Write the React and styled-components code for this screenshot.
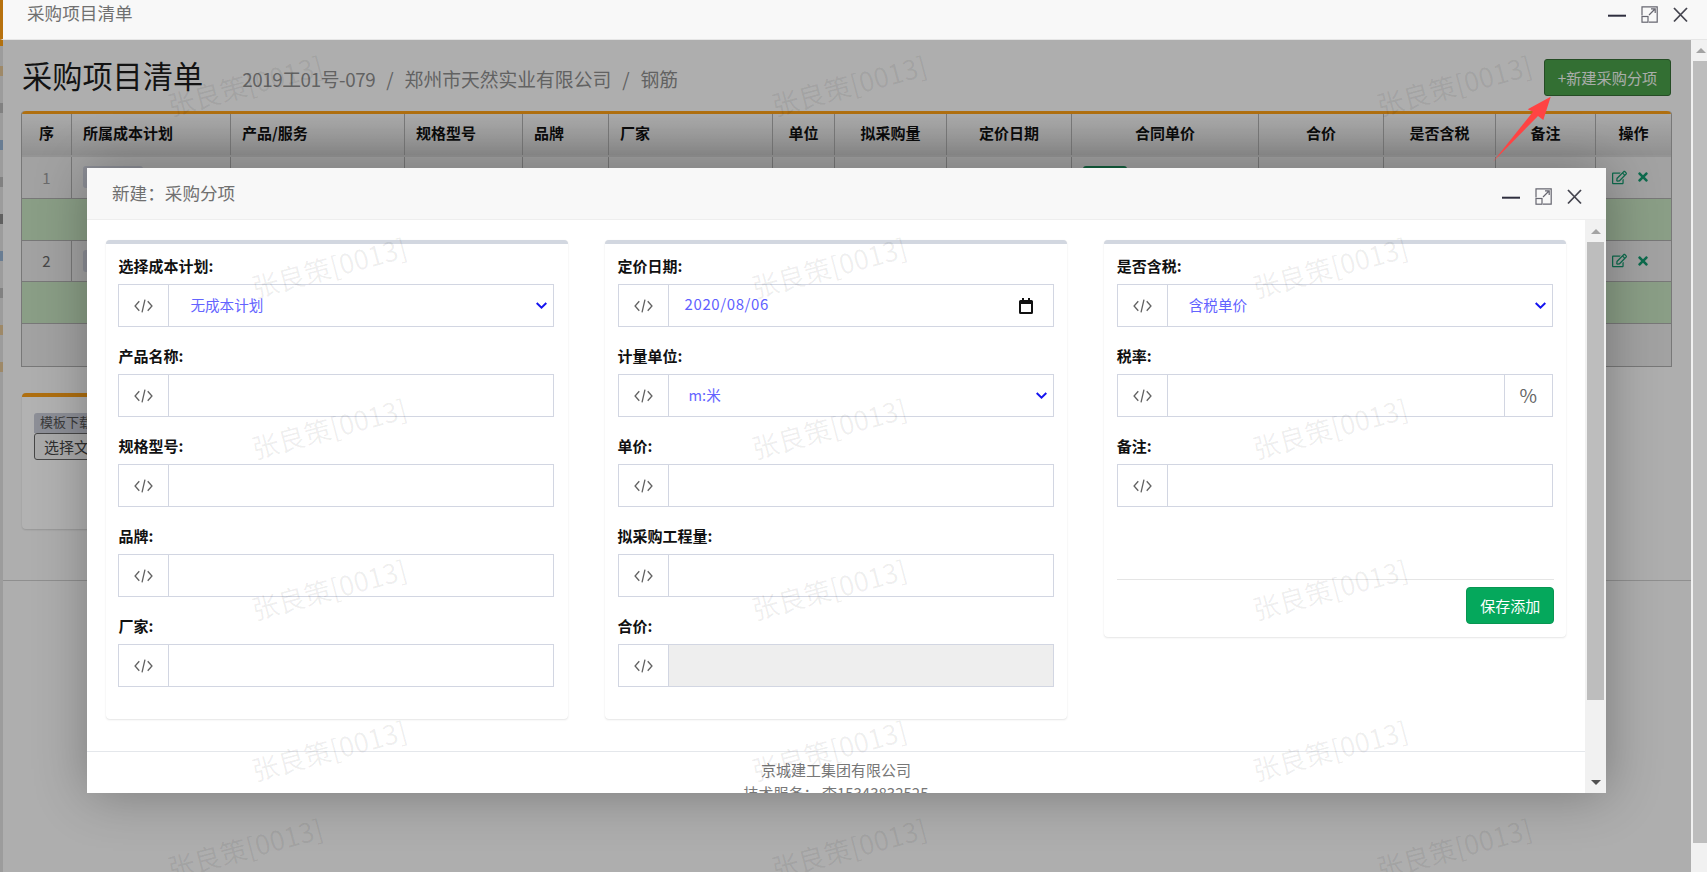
import React from 'react'
import styled, {createGlobalStyle} from 'styled-components'
import {FaRegEdit, FaTimes} from 'react-icons/fa'

const GRID = '50px 159px 174px 118px 86px 164px 62px 112px 125px 187px 125px 112px 100px 75px'

const headCols = [
  {label: '序'},
  {label: '所属成本计划', left: true},
  {label: '产品/服务', left: true},
  {label: '规格型号', left: true},
  {label: '品牌', left: true},
  {label: '厂家', left: true},
  {label: '单位'},
  {label: '拟采购量'},
  {label: '定价日期'},
  {label: '合同单价'},
  {label: '合价'},
  {label: '是否含税'},
  {label: '备注'},
  {label: '操作'},
]

// slivers of the sidebar that show at the very left of the page
const railMarks = ['#e6a13c','#8a8a8a','#3f7fc4','#8a8a8a','#222','#3f7fc4','#8a8a8a','#e6a13c','#e6a13c']

const GlobalStyle = createGlobalStyle`
  html,body{
    margin:0;
    padding:0;
    height:100%;
    overflow:hidden;
    background:#fff;
    font-family:"Noto Sans CJK SC","Noto Sans",sans-serif;
  }
  *{box-sizing:border-box;}
`

const Page = styled.div`
  width:1707px;
  height:872px;
  display:flex;
  flex-direction:column;
  position:relative;
  overflow:hidden;
`

const TitleBar = styled.div`
  height:40px;
  flex:none;
  display:flex;
  justify-content:space-between;
  align-items:flex-start;
  background:#f8f8f8;
  border-left:3px solid #b8720f;
  border-bottom:1px solid #e6e6e6;
  padding-left:24px;
`

const TitleText = styled.div`
  font-size:17.6px;
  line-height:25px;
  color:#707070;
`

const WinIcons = styled.div`
  display:flex;
  align-items:center;
  gap:15px;
  margin-top:${p=>p.$top}px;
  margin-right:${p=>p.$right}px;
`

const Under = styled.div`
  flex:1;
  min-height:0;
  display:flex;
`

const Frame = styled.div`
  flex:1;
  min-width:0;
  position:relative;
  display:flex;
  overflow:hidden;
  background:#fafafa;
`

const Rail = styled.div`
  flex:none;
  width:3px;
  background:#e0e0e0;
  border-top:6px solid #ffa216;
  display:flex;
  flex-direction:column;
  padding-top:20px;
  gap:27px;
  overflow:hidden;
`

const RailMark = styled.span`
  flex:none;
  height:10px;
  background:${p=>p.$color};
  opacity:.45;
`

const Content = styled.div`
  flex:1;
  min-width:0;
`

const Main = styled.div`
  padding:19px 20px 0 19px;
`

const HeadRow = styled.div`
  height:37px;
  display:flex;
  align-items:center;
  margin-bottom:15px;
`

const PageTitle = styled.h1`
  margin:0 0 4px;
  font-size:30.2px;
  line-height:33px;
  font-weight:400;
  color:#1c1c1c;
`

const Crumbs = styled.div`
  display:flex;
  align-items:center;
  gap:11px;
  margin:2px 0 0 39px;
  font-size:18.8px;
  line-height:26px;
  color:#8d8d8d;
`

const CrumbCode = styled.span`
  letter-spacing:-.4px;
`

const NewButton = styled.button`
  margin-left:auto;
  width:127px;
  height:37px;
  padding:0;
  border:1px solid #366e36;
  border-radius:3px;
  background:#49a049;
  color:#f4f8f4;
  font:400 15.2px/33px "Noto Sans CJK SC",sans-serif;
`

const Table = styled.div`
  width:1649px;
  border-top:3px solid #fba017;
  border-radius:4px 4px 0 0;
  border-bottom:1px solid #adadad;
  box-shadow:1px 0 0 #adadad,-1px 0 0 #adadad;
`

const TableHead = styled.div`
  display:grid;
  grid-template-columns:${GRID};
  height:43px;
  border-bottom:2px solid #d4d4d4;
  background:linear-gradient(#f4f4f4,#cfcfcf);
`

const HeadCell = styled.div`
  display:flex;
  align-items:center;
  justify-content:${p=>p.$left?'flex-start':'center'};
  padding:0 0 3px ${p=>p.$left?'11px':'0'};
  border-right:1px solid #adadad;
  font-size:15px;
  line-height:20px;
  font-weight:700;
  color:#111;
  &:last-child{border-right:none;}
`

const Row = styled.div`
  display:grid;
  grid-template-columns:${GRID};
  height:41.8px;
  background:#e8e8e8;
  border-bottom:1px solid #adadad;
`

const Cell = styled.div`
  display:flex;
  align-items:center;
  justify-content:${p=>p.$center?'center':'flex-start'};
  padding-left:${p=>p.$center?'0':'11px'};
  border-right:1px solid #adadad;
  font-size:15px;
  color:${p=>p.$color||'#666'};
  &:last-child{border-right:none;}
`

const Tag = styled.span`
  width:${p=>p.$width}px;
  height:22px;
  border-radius:3px;
  background:${p=>p.$color};
`

const Actions = styled.div`
  display:flex;
  align-items:center;
  gap:9px;
  padding-left:16px;
  color:#139a6f;
`

const DetailRow = styled.div`
  height:41.8px;
  background:#c6e2c0;
  border-bottom:1px solid #adadad;
`

const BlankRow = styled.div`
  height:41.8px;
  background:#e8e8e8;
`

const UploadPanel = styled.div`
  width:700px;
  height:136px;
  margin-top:26px;
  border-top:4px solid #fba017;
  border-radius:4px;
  background:#fff;
  box-shadow:0 1px 2px rgba(0,0,0,.15);
  padding:16px 12px;
`

const UploadTag = styled.div`
  width:80px;
  height:20px;
  padding-left:6px;
  border-radius:3px 3px 0 0;
  background:#cacdd9;
  font-size:13px;
  line-height:17px;
  color:#555;
`

const FileButton = styled.button`
  display:block;
  width:104px;
  height:27px;
  padding:0 0 0 9px;
  text-align:left;
  border:1px solid #666;
  border-radius:3px;
  background:#f4f4f4;
  color:#444;
  font:400 15px/23px "Noto Sans CJK SC",sans-serif;
`

const PageFooterLine = styled.div`
  height:1px;
  margin-top:51px;
  background:#cdcdcd;
`

const Shade = styled.div`
  position:absolute;
  inset:0;
  background:rgba(0,0,0,.3);
`

const Mark = styled.div`
  position:absolute;
  left:${p=>p.$x}px;
  top:${p=>p.$y}px;
  transform:translate(-50%,-50%) rotate(-15deg);
  font-size:27px;
  line-height:28px;
  white-space:nowrap;
  color:rgba(0,0,0,.065);
  pointer-events:none;
`

const ScrollTrack = styled.div`
  flex:none;
  width:${p=>p.$width}px;
  background:#f1f1f1;
  display:flex;
  flex-direction:column;
`

const ScrollGap = styled.div`
  flex:1;
`

const ArrowSlot = styled.div`
  height:${p=>p.$height}px;
  flex:none;
  display:flex;
  align-items:center;
  justify-content:center;
  padding-left:${p=>p.$pad||0}px;
`

const Arrow = styled.span`
  width:0;
  height:0;
  border-left:5px solid transparent;
  border-right:5px solid transparent;
  ${p=>p.$down
    ? 'border-top:5px solid #505050;'
    : 'border-bottom:5px solid #a3a3a3;'}
`

const Thumb = styled.div`
  flex:none;
  height:${p=>p.$height}px;
  margin-left:2px;
  width:${p=>p.$width}px;
  background:#bdbdbd;
`

const Modal = styled.div`
  position:absolute;
  left:87px;
  top:168px;
  width:1519px;
  height:625px;
  display:flex;
  flex-direction:column;
  overflow:hidden;
  background:#fff;
  box-shadow:1px 1px 50px rgba(0,0,0,.3);
`

const ModalHead = styled.div`
  height:52px;
  flex:none;
  display:flex;
  justify-content:space-between;
  align-items:flex-start;
  background:#f8f8f8;
  border-bottom:1px solid #eee;
  padding-left:25px;
`

const ModalTitle = styled.div`
  font-size:17.6px;
  line-height:26px;
  margin-top:12px;
  color:#707070;
`

const ModalBody = styled.div`
  flex:1;
  min-height:0;
  display:flex;
`

const ModalScroll = styled.div`
  flex:1;
  min-width:0;
  overflow:hidden;
`

const Cards = styled.div`
  display:grid;
  grid-template-columns:repeat(3,462px);
  column-gap:37.2px;
  align-items:start;
  padding:20px 0 32px 18.9px;
`

const Card = styled.div`
  border-top:4px solid #d2d7e0;
  border-radius:4px;
  background:#fff;
  box-shadow:0 1px 2px rgba(0,0,0,.1),0 0 1px rgba(0,0,0,.06);
  padding:12px 13.5px 13px 12.5px;
`

const Field = styled.div`
  margin-bottom:19px;
`

const Label = styled.div`
  font-size:15px;
  line-height:20px;
  font-weight:700;
  color:#111;
  margin-bottom:8px;
`

const Group = styled.div`
  display:flex;
  height:43px;
  border:1px solid #d2d6e2;
  background:#fff;
`

const Addon = styled.div`
  flex:none;
  width:${p=>p.$width}px;
  display:flex;
  align-items:center;
  justify-content:center;
  ${p=>p.$end?'border-left':'border-right'}:1px solid #d2d6e2;
`

const CodeWrap = styled.span`
  display:flex;
  padding-top:1px;
`

const Percent = styled.span`
  padding-bottom:3px;
  font-size:19px;
  color:#666;
`

const TextInput = styled.input`
  flex:1;
  min-width:0;
  border:none;
  outline:none;
  padding:0 12px;
  background:#fff;
  &:disabled{background:#eee;}
`

const SelectBox = styled.div`
  flex:1;
  min-width:0;
  display:flex;
  align-items:center;
  justify-content:space-between;
  padding:0 6px 0 ${p=>p.$pad}px;
  font-size:14.6px;
  color:#6464ff;
`

const SelectValue = styled.span`
  margin-bottom:2px;
`

const DateBox = styled.div`
  flex:1;
  min-width:0;
  display:flex;
  align-items:center;
  justify-content:space-between;
  padding:0 20px 4px 16px;
  font-size:15px;
  letter-spacing:.6px;
  color:#5f5fff;
  svg{margin-top:5px;}
`

const CardFoot = styled.div`
  margin-top:72px;
  margin-right:-1.500px;
  border-top:1px solid #e5e5e5;
  padding-top:7px;
  display:flex;
  justify-content:flex-end;
`

const SaveButton = styled.button`
  width:88px;
  height:37px;
  padding:0;
  border:1px solid #089652;
  border-radius:4px;
  background:#05a85c;
  color:#fff;
  font:400 15px/33px "Noto Sans CJK SC",sans-serif;
`

const ModalFoot = styled.div`
  border-top:1px solid #e4e7eb;
  padding-top:6px;
  text-align:center;
  font-size:15px;
  line-height:23px;
  color:#777;
`

const PointerArrow = styled.svg`
  position:absolute;
  left:1490px;
  top:94px;
`

function MinIcon(){
  return (
    <svg width="18" height="17" viewBox="0 0 18 17">
      <path d="M0 9.7H18" stroke="#2e2e3e" strokeWidth="2"/>
    </svg>
  )
}

function MaxIcon(){
  return (
    <svg width="17" height="17" viewBox="0 0 17 17" fill="none" stroke="#666670" strokeWidth="1.2">
      <path d="M1 9.5V.8H16.2V16.2H8"/>
      <rect x="1" y="10.5" width="6" height="5.7"/>
      <path d="M8 9L14 3M10 2.8H14.2V7"/>
    </svg>
  )
}

function CloseIcon(){
  return (
    <svg width="15" height="17" viewBox="0 0 15 17" fill="none" stroke="#45454f" strokeWidth="1.8">
      <path d="M1 2L14 15.5M14 2L1 15.5"/>
    </svg>
  )
}

function WindowButtons({top,right}){
  return (
    <WinIcons $top={top} $right={right}>
      <MinIcon/>
      <MaxIcon/>
      <CloseIcon/>
    </WinIcons>
  )
}

function CodeIcon(){
  return (
    <CodeWrap>
      <svg width="19" height="14" viewBox="0 0 18 13" fill="none" stroke="#626262" strokeWidth="1.25">
        <path d="M5 2L1 6.5L5 11M13 2L17 6.5L13 11M10.4 .4L7.6 12.6"/>
      </svg>
    </CodeWrap>
  )
}

function Chevron(){
  return (
    <svg width="11" height="7" viewBox="0 0 11 7" fill="none" stroke="#1414f0" strokeWidth="2">
      <path d="M.7 1L5.5 5.6L10.3 1"/>
    </svg>
  )
}

function CalendarIcon(){
  return (
    <svg width="14" height="16" viewBox="0 0 14 16">
      <path fill="#111" d="M3 0h2v2h4V0h2v2h1.5A1.5 1.5 0 0 1 14 3.500v11a1.500 1.500 0 0 1-1.500 1.500h-11A1.500 1.500 0 0 1 0 14.500v-11A1.500 1.500 0 0 1 1.500 2H3zM2 6v8h10V6z"/>
    </svg>
  )
}

function InputField({label,disabled}){
  return (
    <Field>
      <Label>{label}</Label>
      <Group>
        <Addon $width={50}><CodeIcon/></Addon>
        <TextInput disabled={disabled}/>
      </Group>
    </Field>
  )
}

function SelectField({label,value,pad}){
  return (
    <Field>
      <Label>{label}</Label>
      <Group>
        <Addon $width={50}><CodeIcon/></Addon>
        <SelectBox $pad={pad}>
          <SelectValue>{value}</SelectValue>
          <Chevron/>
        </SelectBox>
      </Group>
    </Field>
  )
}

function ScrollBar({width,thumbWidth,topSlot,thumb,bottomSlot,pad}){
  return (
    <ScrollTrack $width={width}>
      <ArrowSlot $height={topSlot} $pad={pad}><Arrow/></ArrowSlot>
      <Thumb $height={thumb} $width={thumbWidth}/>
      <ScrollGap/>
      {bottomSlot && <ArrowSlot $height={bottomSlot}><Arrow $down/></ArrowSlot>}
    </ScrollTrack>
  )
}

const outerMarks = [[244.5,45],[849,45],[1453.5,45],[244.5,808],[849,808],[1453.5,808]]
const modalMarkX = [241.5,742,1242.5]
const modalMarkY = [99,260,421,582]

export default function App() {
  return (
    <Page>
      <GlobalStyle/>
      <TitleBar>
        <TitleText>采购项目清单</TitleText>
        <WindowButtons top={6} right={19}/>
      </TitleBar>

      <Under>
        <Frame>
          <Rail>
            {railMarks.map((color,i)=><RailMark key={i} $color={color}/>)}
          </Rail>
          <Content>
            <Main>
              <HeadRow>
                <PageTitle>采购项目清单</PageTitle>
                <Crumbs>
                  <CrumbCode>2019工01号-079</CrumbCode>
                  <span>/</span>
                  <span>郑州市天然实业有限公司</span>
                  <span>/</span>
                  <span>钢筋</span>
                </Crumbs>
                <NewButton>+新建采购分项</NewButton>
              </HeadRow>

              <Table>
                <TableHead>
                  {headCols.map(c=><HeadCell key={c.label} $left={c.left}>{c.label}</HeadCell>)}
                </TableHead>
                {[1,2].map(no=>(
                  <React.Fragment key={no}>
                    <Row>
                      <Cell $center $color={no===1?'#9a9a9a':'#666'}>{no}</Cell>
                      <Cell><Tag $width={60} $color="#cacdd9"/></Cell>
                      <Cell/><Cell/><Cell/><Cell/><Cell/><Cell/><Cell/>
                      <Cell><Tag $width={44} $color="#1c8a5a"/></Cell>
                      <Cell/><Cell/><Cell/>
                      <Actions>
                        <FaRegEdit size={15}/>
                        <FaTimes size={14}/>
                      </Actions>
                    </Row>
                    <DetailRow/>
                  </React.Fragment>
                ))}
                <BlankRow/>
              </Table>

              <UploadPanel>
                <UploadTag>模板下载</UploadTag>
                <FileButton>选择文件</FileButton>
              </UploadPanel>
            </Main>
            <PageFooterLine/>
          </Content>
          <Shade/>
          {outerMarks.map(([x,y])=><Mark key={x+'-'+y} $x={x} $y={y}>张良策[0013]</Mark>)}
        </Frame>
        <ScrollBar width={16} thumbWidth={14} topSlot={21} thumb={782} pad={4}/>
      </Under>

      <Modal>
        <ModalHead>
          <ModalTitle>新建：采购分项</ModalTitle>
          <WindowButtons top={20} right={24}/>
        </ModalHead>
        <ModalBody>
          <ModalScroll>
            <Cards>
              <Card>
                <SelectField label="选择成本计划:" value="无成本计划" pad={21}/>
                <InputField label="产品名称:"/>
                <InputField label="规格型号:"/>
                <InputField label="品牌:"/>
                <InputField label="厂家:"/>
              </Card>
              <Card>
                <Field>
                  <Label>定价日期:</Label>
                  <Group>
                    <Addon $width={50}><CodeIcon/></Addon>
                    <DateBox>
                      <span>2020/08/06</span>
                      <CalendarIcon/>
                    </DateBox>
                  </Group>
                </Field>
                <SelectField label="计量单位:" value="m:米" pad={20}/>
                <InputField label="单价:"/>
                <InputField label="拟采购工程量:"/>
                <InputField label="合价:" disabled/>
              </Card>
              <Card>
                <SelectField label="是否含税:" value="含税单价" pad={21}/>
                <Field>
                  <Label>税率:</Label>
                  <Group>
                    <Addon $width={50}><CodeIcon/></Addon>
                    <TextInput/>
                    <Addon $width={48} $end><Percent>%</Percent></Addon>
                  </Group>
                </Field>
                <InputField label="备注:"/>
                <CardFoot>
                  <SaveButton>保存添加</SaveButton>
                </CardFoot>
              </Card>
            </Cards>
            <ModalFoot>
              <div>京城建工集团有限公司</div>
              <div>技术服务： 李15343832525</div>
            </ModalFoot>
          </ModalScroll>
          <ScrollBar width={21} thumbWidth={17} topSlot={22} thumb={458} bottomSlot={22}/>
        </ModalBody>
        {modalMarkY.map(y=>modalMarkX.map(x=>(
          <Mark key={x+'-'+y} $x={x} $y={y}>张良策[0013]</Mark>
        )))}
      </Modal>

      <PointerArrow width="64" height="72" viewBox="0 0 64 72">
        <polygon fill="#ff4343" points="60.700,2.700 53.300,26 48,22 3,67.700 43,17.700 37.700,15.300"/>
      </PointerArrow>
    </Page>
  )
}
